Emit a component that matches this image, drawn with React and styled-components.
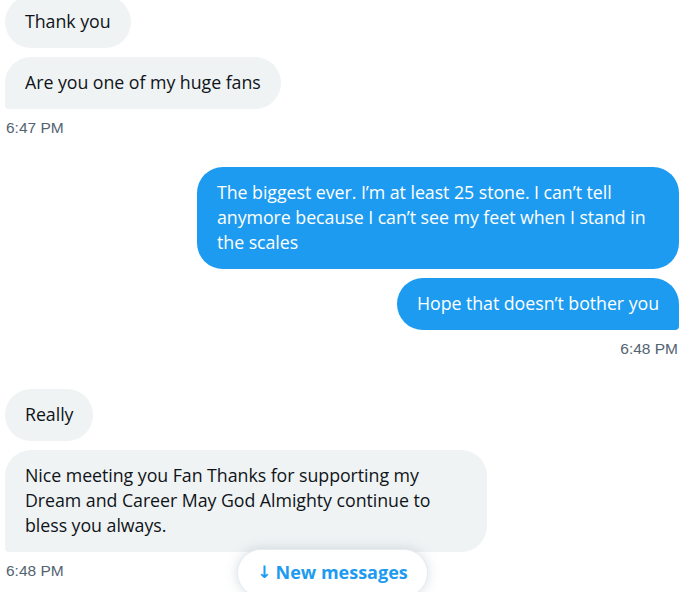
import React from "react";
import styled, { createGlobalStyle } from "styled-components";

const Global = createGlobalStyle`
  html, body { margin: 0; padding: 0; background: #ffffff; }
  body { font-family: "Open Sans", "Noto Sans", "Liberation Sans", sans-serif; overflow: hidden; }
`;

const Page = styled.div`
  position: relative;
  width: 689px;
  height: 592px;
  overflow: hidden;
  background: #ffffff;
`;

const Thread = styled.div`
  display: flex;
  flex-direction: column;
  padding: 0 10px 0 5px;
  margin-top: -4px;
`;

const Group = styled.div`
  display: flex;
  flex-direction: column;
  align-items: ${(p) => (p.$sent ? "flex-end" : "flex-start")};
  gap: 9px;
  margin-bottom: ${(p) => p.$mb || 0}px;
`;

const Bubble = styled.div`
  box-sizing: border-box;
  max-width: 482px;
  padding: 13px 20px 14px;
  font-size: 17.8px;
  line-height: 25px;
  letter-spacing: -0.05px;
  border-radius: 26px;
  background: ${(p) => (p.$sent ? "#1d9bf0" : "#eff3f4")};
  color: ${(p) => (p.$sent ? "#ffffff" : "#0f1419")};
  ${(p) => p.$last && (p.$sent ? "border-bottom-right-radius: 4px;" : "border-bottom-left-radius: 4px;")}
`;

const Time = styled.div`
  font-family: "Liberation Sans", Arial, sans-serif;
  font-size: 15.5px;
  line-height: 20px;
  color: #536471;
  padding: 0 1px;
`;

const NewPill = styled.button`
  position: absolute;
  left: 237px;
  top: 549px;
  width: 191px;
  height: 48px;
  border-radius: 24px;
  background: #ffffff;
  border: 1px solid #e6ecf0;
  box-shadow: 0 0 12px rgba(101, 119, 134, 0.25);
  color: #1d9bf0;
  font-family: "Open Sans", "Noto Sans", sans-serif;
  font-weight: 700;
  font-size: 18px;
  display: flex;
  align-items: center;
  justify-content: center;
  gap: 4px;
  padding: 0 0 2px;
`;

const Arrow = styled.span`
  font-family: "DejaVu Sans", sans-serif;
  font-weight: 700;
  font-size: 17px;
`;

export default function App() {
  return (
    <Page>
      <Global />
      <Thread>
        <Group $mb={29}>
          <Bubble>Thank you</Bubble>
          <Bubble $last>Are you one of my huge fans</Bubble>
          <Time>6:47 PM</Time>
        </Group>
        <Group $sent $mb={30}>
          <Bubble $sent>
            The biggest ever. I’m at least 25 stone. I can’t tell anymore because I can’t see my feet when I stand in the scales
          </Bubble>
          <Bubble $sent $last>Hope that doesn’t bother you</Bubble>
          <Time $sent>6:48 PM</Time>
        </Group>
        <Group>
          <Bubble>Really</Bubble>
          <Bubble $last>
            Nice meeting you Fan Thanks for supporting my Dream and Career May God Almighty continue to bless you always.
          </Bubble>
          <Time>6:48 PM</Time>
        </Group>
      </Thread>
      <NewPill>
        <Arrow>↓</Arrow>
        <span>New messages</span>
      </NewPill>
    </Page>
  );
}
